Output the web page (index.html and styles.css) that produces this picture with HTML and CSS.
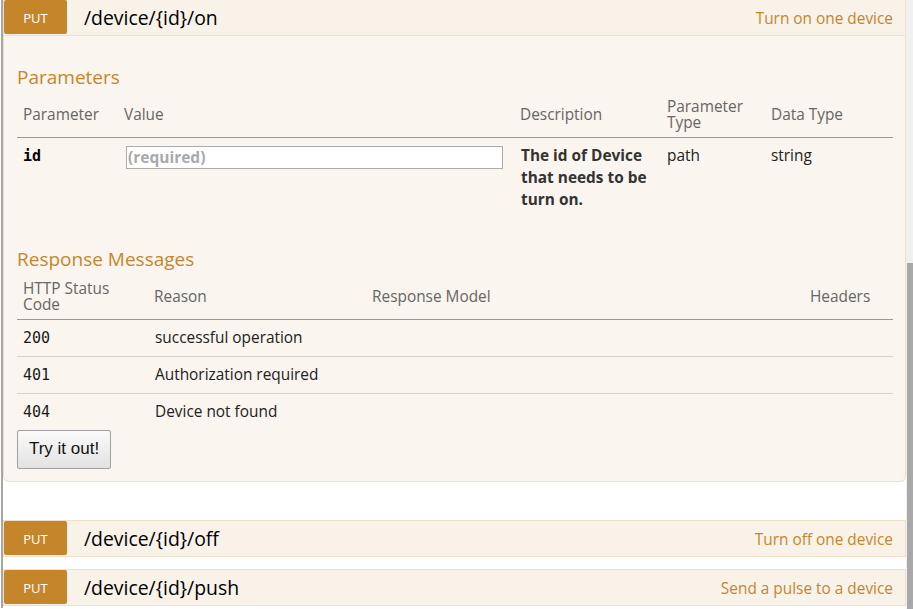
FILE: index.html
```html
<!DOCTYPE html>
<html>
<head>
<meta charset="utf-8">
<link rel="stylesheet" href="styles.css">
</head>
<body>
<div class="page">
  <div class="op op-first">
    <div class="heading">
      <span class="method">PUT</span>
      <span class="path">/device/{id}/on</span>
      <span class="summary">Turn on one device</span>
    </div>
    <div class="content">
      <h4 class="section">Parameters</h4>
      <div class="grid params">
        <div class="th">Parameter</div>
        <div class="th">Value</div>
        <div class="th">Description</div>
        <div class="th">Parameter<br>Type</div>
        <div class="th">Data Type</div>
        <div class="td code bold">id</div>
        <div class="td"><input class="input" type="text" placeholder="(required)"></div>
        <div class="td strong">The id of Device that needs to be turn on.</div>
        <div class="td">path</div>
        <div class="td">string</div>
      </div>
      <h4 class="section">Response Messages</h4>
      <div class="grid responses">
        <div class="th">HTTP Status<br>Code</div>
        <div class="th">Reason</div>
        <div class="th">Response Model</div>
        <div class="th">Headers</div>
        <div class="td code">200</div>
        <div class="td">successful operation</div>
        <div class="td"></div>
        <div class="td"></div>
        <div class="td code">401</div>
        <div class="td">Authorization required</div>
        <div class="td"></div>
        <div class="td"></div>
        <div class="td code last">404</div>
        <div class="td last">Device not found</div>
        <div class="td last"></div>
        <div class="td last"></div>
      </div>
      <button class="try" type="button">Try it out!</button>
    </div>
  </div>
  <div class="op op-second">
    <div class="heading">
      <span class="method">PUT</span>
      <span class="path">/device/{id}/off</span>
      <span class="summary">Turn off one device</span>
    </div>
  </div>
  <div class="op op-third">
    <div class="heading">
      <span class="method">PUT</span>
      <span class="path">/device/{id}/push</span>
      <span class="summary">Send a pulse to a device</span>
    </div>
  </div>
</div>
<div class="scroll-track"><div class="scroll-thumb"></div></div>
</body>
</html>
```
FILE: styles.css
```css
html, body {
  margin: 0;
  padding: 0;
  background: #ffffff;
}
body {
  font-family: "Open Sans", "Noto Sans", sans-serif;
  font-size: 15.4px;
  color: #333333;
  overflow: hidden;
}
.page {
  margin-left: 1px;
  border-left: 2px solid #a6a6a6;
  padding-right: 7px;
  min-height: 100vh;
  box-sizing: border-box;
}
.op-first {
  margin-top: -1px;
}
.op-second {
  margin-top: 38px;
}
.op-third {
  margin-top: 12px;
}
.heading {
  display: flex;
  align-items: center;
  height: 35px;
  background: #f9f2e9;
  border: 1px solid #f0e0ca;
  padding-right: 12px;
}
.method {
  display: flex;
  align-items: center;
  justify-content: center;
  align-self: flex-start;
  width: 63px;
  height: 34px;
  padding-top: 1px;
  box-sizing: border-box;
  background: #c5862b;
  color: #ffffff;
  font-size: 13px;
  border-radius: 2px;
}
.path {
  margin-left: 17px;
  font-size: 19.4px;
  color: #000000;
  flex: 1;
}
.summary {
  font-size: 15.4px;
  color: #c5862b;
  padding-top: 2px;
}
.content {
  background: #faf5ee;
  border: 1px solid #f0e0ca;
  border-top: none;
  border-radius: 0 0 6px 6px;
  padding: 28px 12px 12px 13px;
}
.section {
  margin: 0;
  font-size: 19px;
  font-weight: normal;
  line-height: 26px;
  color: #c5862b;
}
.grid {
  display: grid;
}
.params {
  grid-template-columns: 101px 396px 147px 104px 128px;
  margin-bottom: 30px;
}
.responses {
  grid-template-columns: 131px 218px 438px 89px;
}
.th {
  display: flex;
  align-items: center;
  padding: 9px 6px 6px 6px;
  line-height: 16px;
  min-height: 32px;
  color: #666666;
  border-bottom: 1px solid #999999;
}
.td {
  padding: 7px 6px 5px 6px;
  line-height: 22px;
  color: #222222;
}
.params .td.strong {
  padding-left: 7px;
}
.responses .td {
  padding: 7px 6px 7px 6px;
  border-bottom: 1px solid #d6d2cc;
}
.responses .td.last {
  border-bottom: none;
}
.responses .td:nth-child(4n+2) {
  padding-left: 7px;
}
.code {
  font-family: "DejaVu Sans Mono", monospace;
  font-size: 15px;
  color: #1a1a1a;
}
.bold {
  font-weight: bold;
  color: #000000;
}
.strong {
  font-weight: bold;
  color: #333333;
}
.input {
  display: block;
  box-sizing: border-box;
  margin: 1px 0 0 2px;
  width: 377px;
  height: 23px;
  padding: 0 1px 2px 1px;
  border: 1px solid #aaaaaa;
  background: #ffffff;
  font-family: "Open Sans", sans-serif;
  font-size: 15.5px;
  font-weight: bold;
}
.input::placeholder {
  color: #a9a9a9;
}
.try {
  display: block;
  box-sizing: border-box;
  width: 94px;
  height: 39px;
  padding: 0 0 2px 0;
  border: 1px solid #a0a0a0;
  border-radius: 2px;
  background: linear-gradient(#fafafa, #e2e2e2);
  font-family: "Liberation Sans", Arial, sans-serif;
  font-size: 17px;
  color: #111111;
}
.scroll-track {
  position: fixed;
  top: 0;
  right: 0;
  width: 7px;
  height: 100%;
  background: #f0f0f0;
}
.scroll-thumb {
  position: absolute;
  top: 263px;
  bottom: 0;
  left: 1px;
  right: 0;
  background: #a8a8a8;
}
```
